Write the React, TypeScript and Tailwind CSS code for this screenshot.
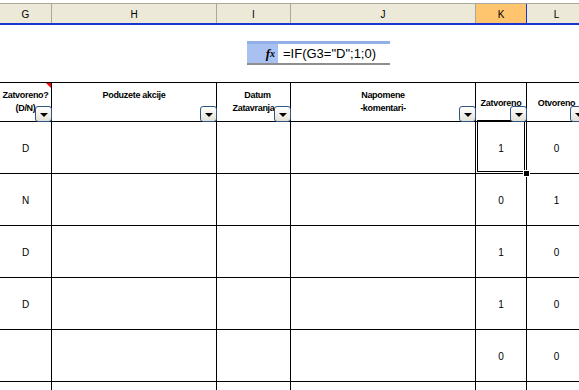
import React from 'react'

type Col = { key: string; w: string }

const cols: Col[] = [
  { key: 'G', w: 'w-[52px]' },
  { key: 'H', w: 'w-[165px]' },
  { key: 'I', w: 'w-[74px]' },
  { key: 'J', w: 'w-[185px]' },
  { key: 'K', w: 'w-[51px]' },
  { key: 'L', w: 'w-[60px]' },
]

const rows = [
  ['D', '1', '0'],
  ['N', '0', '1'],
  ['D', '1', '0'],
  ['D', '1', '0'],
  ['', '0', '0'],
  ['', '', ''],
]

function FilterButton() {
  return (
    <div className="absolute right-[-1px] bottom-[-1px] z-10 flex h-[16px] w-[17px] items-center justify-center rounded-[3px] border border-[#2d5687] bg-linear-to-b from-white to-[#e4e1d5]">
      <div className="mt-[2px] h-0 w-0 border-x-[4px] border-t-[4px] border-x-transparent border-t-black" />
    </div>
  )
}

function HeaderCell({ w, children, centerY }: { w: string; children: React.ReactNode; centerY?: boolean }) {
  return (
    <div
      className={`relative ${w} shrink-0 border-r border-black text-center text-[9px] font-bold leading-[13px] tracking-[-0.3px] text-black ${
        centerY ? 'pt-[14px]' : 'pt-[6px]'
      }`}
    >
      {children}
      <FilterButton />
    </div>
  )
}

export default function App() {
  return (
    <div className="h-[390px] w-[579px] overflow-hidden bg-white font-['Liberation_Sans',Arial,sans-serif] text-black">
      <div className="w-[587px]">
        {/* column letters */}
        <div className="h-[3px]" />
        <div className="flex h-[22px] border-t border-b-2 border-t-[#aca899] border-b-[#1537d0] bg-[#ece9d8]">
          {cols.map((c) => (
            <div
              key={c.key}
              className={`flex ${c.w} shrink-0 items-center justify-center border-r pt-[1px] text-[10px] ${
                c.key === 'K' ? 'border-r-[#1537d0] bg-[#ffc56e]' : 'border-r-[#aca899]'
              }`}
            >
              {c.key}
            </div>
          ))}
        </div>

        {/* formula bar */}
        <div className="h-[57px] pt-[16px]">
          <div className="ml-[247px] w-[143px] border-b-2 border-[#8e8e8e]">
            <div className="h-[3px] bg-[#93afe8]" />
            <div className="flex h-[19px]">
              <div className="flex w-[31px] items-center justify-end bg-[#a9c1f1] pr-[3px] font-['Liberation_Serif',serif] text-[13px] font-bold italic leading-none">
                f<span className="text-[10px]">x</span>
              </div>
              <div className="flex flex-1 items-center pl-[5px] text-[13px] leading-none">=IF(G3="D";1;0)</div>
            </div>
          </div>
        </div>

        {/* table */}
        <div className="border-t border-black">
          <div className="flex h-[39px] border-b border-black">
            <HeaderCell w="w-[52px]">
              Zatvoreno?
              <br />
              (D/N)
              <div className="absolute top-0 right-0 h-0 w-0 border-l-[5px] border-t-[5px] border-l-transparent border-t-[#ff0000]" />
            </HeaderCell>
            <HeaderCell w="w-[165px]">Poduzete akcije</HeaderCell>
            <HeaderCell w="w-[74px]">
              <span className="pl-[8px]">Datum</span>
              <br />
              Zatavranja
            </HeaderCell>
            <HeaderCell w="w-[185px]">
              Napomene
              <br />
              -komentari-
            </HeaderCell>
            <HeaderCell w="w-[51px]" centerY>
              Zatvoreno
            </HeaderCell>
            <HeaderCell w="w-[60px]" centerY>
              Otvoreno
            </HeaderCell>
          </div>

          {rows.map((r, i) => (
            <div key={i} className="flex h-[52px] border-b border-black text-[10px] leading-[12px]">
              <div className="flex w-[52px] shrink-0 items-center justify-center border-r border-black pt-[2px]">{r[0]}</div>
              <div className="w-[165px] shrink-0 border-r border-black" />
              <div className="w-[74px] shrink-0 border-r border-black" />
              <div className="w-[185px] shrink-0 border-r border-black" />
              <div className="relative flex w-[51px] shrink-0 items-center justify-center border-r border-black pt-[2px]">
                {r[1]}
                {i === 0 && (
                  <>
                    <div className="absolute top-[-2px] right-[1px] bottom-[1px] left-[1px] border border-t-2 border-black" />
                    <div className="absolute right-[-4px] bottom-[-4px] z-20 h-[7px] w-[7px] border border-white bg-black" />
                  </>
                )}
              </div>
              <div className="flex w-[60px] shrink-0 items-center justify-center border-r border-black pt-[2px]">{r[2]}</div>
            </div>
          ))}
        </div>
      </div>
    </div>
  )
}
